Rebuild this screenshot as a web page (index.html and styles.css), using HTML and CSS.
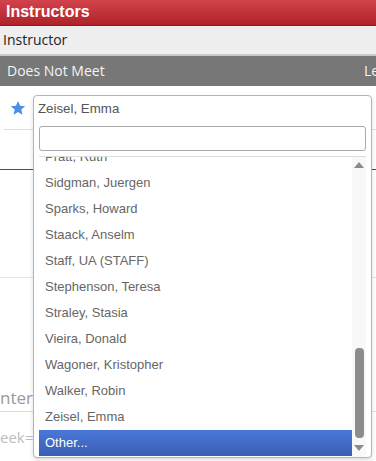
FILE: index.html
```html
<!DOCTYPE html>
<html lang="en">
<head>
    <meta charset="UTF-8">
    <meta name="viewport" content="width=device-width, initial-scale=1.0">
    <title>Instructors</title>
    <link rel="stylesheet" href="styles.css">
</head>
<body>
    <div class="panel">
        <div class="panel-title">Instructors</div>
        <div class="col-head">Instructor</div>
        <div class="group-row"><span class="group-name">Does Not Meet</span><span>Lecture</span></div>
        <div class="inst-row">
            <svg class="star" width="16" height="16" viewBox="0 0 24 24"><polygon points="12,1.5 15.1,8.6 22.8,9.3 17,14.4 18.7,22 12,18 5.3,22 7,14.4 1.2,9.3 8.9,8.6"/></svg>
        </div>
        <div class="inst-foot"></div>
    </div>
    <div class="section-blank"></div>
    <div class="section">
        <div class="section-title">nternational</div>
        <div class="section-url">eek=3</div>
    </div>

    <!-- select2 style dropdown, open over the panel -->
    <div class="dropdown">
        <div class="dd-current">Zeisel, Emma</div>
        <div class="dd-search"><input type="text"></div>
        <div class="dd-results">
            <div class="dd-view">
                <ul class="dd-list">
                    <li>Pratt, Ruth</li>
                    <li>Sidgman, Juergen</li>
                    <li>Sparks, Howard</li>
                    <li>Staack, Anselm</li>
                    <li>Staff, UA (STAFF)</li>
                    <li>Stephenson, Teresa</li>
                    <li>Straley, Stasia</li>
                    <li>Vieira, Donald</li>
                    <li>Wagoner, Kristopher</li>
                    <li>Walker, Robin</li>
                    <li>Zeisel, Emma</li>
                    <li class="active">Other...</li>
                </ul>
            </div>
            <div class="dd-scroll">
                <span class="arrow-up"></span>
                <span class="thumb"></span>
                <span class="arrow-down"></span>
            </div>
        </div>
    </div>
</body>
</html>
```

FILE: styles.css
```css
html, body {
    overflow: hidden;
}

body {
    font-family: "Open Sans", Arial, sans-serif;
    background-color: #fff;
    margin: 0;
    padding: 0;
    width: 376px;
    height: 461px;
    position: relative;
}

.panel-title {
    height: 25px;
    line-height: 24px;
    padding-left: 6px;
    font-family: "Liberation Sans", Arial, sans-serif;
    font-weight: bold;
    font-size: 16px;
    color: #fff;
    background: linear-gradient(#d2434c, #b0222a);
    border-bottom: 1px solid #8e1a1f;
}

.col-head {
    height: 28px;
    line-height: 28px;
    padding-left: 3px;
    font-size: 14px;
    color: #222;
    background-color: #eeeeee;
    border-bottom: 2px solid #c9c9c9;
}

.group-row {
    display: flex;
    white-space: nowrap;
    height: 30px;
    line-height: 30px;
    padding-left: 7px;
    font-size: 14px;
    color: #f4f4f4;
    background-color: #777777;
}

.group-name {
    flex: 0 0 357px;
}

.inst-row {
    box-sizing: border-box;
    height: 44px;
    padding: 14px 0 0 6px;
    margin-left: 4px;
    border-bottom: 1px solid #dddddd;
}

.star {
    display: block;
    fill: #4a8fe8;
}

.inst-foot {
    height: 39px;
    border-bottom: 1px solid #a52a2a;
}

.section-blank {
    height: 107px;
    border-bottom: 1px solid #e2e2e2;
}

.section {
    padding-top: 107px;
}

.section-title {
    font-size: 17px;
    line-height: 26px;
    color: #9a9a9a;
    border-bottom: 1px solid #dddddd;
    white-space: nowrap;
}

.section-url {
    padding-top: 16px;
    font-size: 15px;
    line-height: 18px;
    color: #bdbdbd;
}

/* dropdown */
.dropdown {
    position: absolute;
    left: 33px;
    top: 95px;
    width: 337px;
    height: 361px;
    background-color: #fff;
    border: 1px solid #b5b5b5;
    border-radius: 4px;
    box-shadow: 0 2px 4px rgba(0, 0, 0, 0.15);
    font-family: "Liberation Sans", Arial, sans-serif;
    font-size: 13px;
}

.dd-current {
    height: 28px;
    line-height: 26px;
    padding-left: 4px;
    color: #555;
    font-size: 13.3px;
}

.dd-search {
    padding: 2px 5px 5px 5px;
}

.dd-search input {
    display: block;
    box-sizing: border-box;
    width: 327px;
    height: 25px;
    margin: 0;
    border: 1px solid #aaaaaa;
    border-radius: 3px;
    outline: none;
}

.dd-results {
    display: flex;
    margin: 0 5px 0 5px;
    height: 300px;
    border-top: 1px solid #dddddd;
}

.dd-view {
    flex: 1;
    overflow: hidden;
}

.dd-list {
    list-style-type: none;
    margin: -13px 0 0 0;
    padding: 0;
}

.dd-list li {
    height: 26px;
    line-height: 26px;
    padding-left: 6px;
    color: #666;
    white-space: nowrap;
}

.dd-list li.active {
    color: #fff;
    background: linear-gradient(#4a78d8, #3a5db4);
}

.dd-scroll {
    position: relative;
    width: 14px;
    background-color: #f8f8f8;
}

.arrow-up, .arrow-down {
    position: absolute;
    left: 2px;
    width: 0;
    height: 0;
    border-left: 5px solid transparent;
    border-right: 5px solid transparent;
}

.arrow-up {
    top: 5px;
    border-bottom: 6px solid #8a8a8a;
}

.arrow-down {
    bottom: 6px;
    border-top: 6px solid #8a8a8a;
}

.thumb {
    position: absolute;
    left: 3px;
    top: 191px;
    width: 9px;
    height: 90px;
    border-radius: 4px;
    background-color: #8c8c8c;
}
```
